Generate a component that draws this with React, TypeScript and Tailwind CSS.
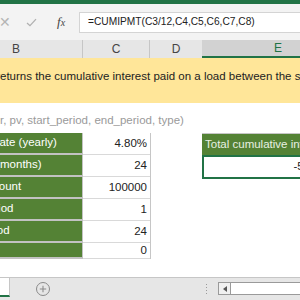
const font = { fontFamily: '"Liberation Sans", Arial, sans-serif' };

const rows = [
  { label: "Interest rate (yearly)", value: "4.80%", h: "h-[22px]" },
  { label: "Periods (months)", value: "24", h: "h-[22px]" },
  { label: "Loan amount", value: "100000", h: "h-[22px]" },
  { label: "Start period", value: "1", h: "h-[22px]" },
  { label: "End period", value: "24", h: "h-[22px]" },
  { label: "Type", value: "0", h: "h-[16px]" },
];

// text whose start is scrolled off the left edge of the sheet
function Clipped({ hidden, shown }: { hidden: string; shown: string }) {
  return (
    <div className="flex whitespace-nowrap">
      <span className="flex w-0 shrink-0 justify-end">{hidden}</span>
      <span>{shown}</span>
    </div>
  );
}

export default function App() {
  return (
    <div
      className="flex h-[300px] w-[300px] flex-col overflow-hidden bg-white text-[11.5px] text-[#222]"
      style={font}
    >
      <div className="h-[4px] shrink-0 bg-[#217346]" />

      {/* formula bar */}
      <div className="flex h-[36px] shrink-0 items-center bg-[#f3f3f3]">
        <div className="flex w-[79px] shrink-0 items-center text-[#b5b5b5]">
          <span className="ml-[-1px] w-[26px] text-[14px]">✕</span>
          <svg viewBox="0 0 12 10" className="ml-[1px] h-[9px] w-[11px]" fill="none" stroke="#b0b0b0" strokeWidth="1.4">
            <path d="M1 5.5 L4.3 8.5 L11 1.2" />
          </svg>
          <span
            className="ml-[20px] text-[13px] italic text-[#444]"
            style={{ fontFamily: '"Liberation Serif", serif' }}
          >
            f<span className="text-[10px]">x</span>
          </span>
        </div>
        <div className="flex h-[21px] flex-1 items-center border border-r-0 border-[#d4d4d4] bg-white pl-[8px] text-[10.2px] text-[#222]">
          =CUMIPMT(C3/12,C4,C5,C6,C7,C8)
        </div>
      </div>

      {/* column headers */}
      <div className="flex h-[18px] shrink-0 bg-[#e6e6e6] text-[12px] text-[#444]">
        <div className="flex w-[83px] shrink-0 items-center border-r border-[#c6c6c6] pl-[12px]">B</div>
        <div className="flex w-[67px] shrink-0 items-center justify-center border-r border-[#c6c6c6]">C</div>
        <div className="flex w-[52px] shrink-0 items-center justify-center">D</div>
        <div className="flex w-[152px] shrink-0 items-center justify-center border-b-2 border-[#217346] bg-[#d2d2d2] text-[#217346]">
          E
        </div>
      </div>

      {/* description */}
      <div className="h-[45px] shrink-0 bg-[#ffe699] pt-[10px] text-[#222]">
        <Clipped
          hidden="The Excel CUMIPMT function r"
          shown="eturns the cumulative interest paid on a load between the start period and end period."
        />
      </div>

      <div className="flex h-[30px] shrink-0 items-center pt-[6px] text-[#9a9a9a]">
        <Clipped hidden="=CUMIPMT(rate, npe" shown="r, pv, start_period, end_period, type)" />
      </div>

      {/* tables */}
      <div className="flex shrink-0">
        <div className="flex w-[151px] shrink-0 flex-col border-r border-[#c6c6c6]">
          {rows.map((r) => (
            <div key={r.label} className={`flex ${r.h} shrink-0`}>
              <div className="flex w-[83px] shrink-0 items-center overflow-hidden border-b-2 border-r border-[#c2c2c2] bg-[#548235] text-white">
                <span className="ml-[-46px] whitespace-nowrap">{r.label}</span>
              </div>
              <div className="flex flex-1 items-center justify-end border-b border-[#d9d9d9] pr-[3px]">
                {r.value}
              </div>
            </div>
          ))}
        </div>

        <div className="ml-[51px] flex w-[146px] shrink-0 flex-col">
          <div className="flex h-[22px] items-center border-t border-[#c6c6c6] bg-[#548235] pl-[3px] whitespace-nowrap text-[#e8f0e2]">
            Total cumulative interest
          </div>
          <div className="flex h-[24px] items-center justify-end border-2 border-[#217346] pr-[4px]">
            -5,076.56
          </div>
        </div>
      </div>

      <div className="flex-1" />

      {/* sheet tabs */}
      <div className="flex h-[23px] shrink-0 items-start border-t border-[#c6c6c6] bg-[#e6e6e6]">
        <div className="h-[19px] w-[10px] shrink-0 border-r border-b-2 border-r-[#c6c6c6] border-b-[#217346] bg-white" />
        <div className="ml-[26px] mt-[4px] flex h-[14px] w-[14px] items-center justify-center rounded-full border border-[#8a8a8a] text-[#8a8a8a]">
          <svg viewBox="0 0 10 10" className="h-[8px] w-[8px]" stroke="currentColor" strokeWidth="1.3">
            <path d="M5 1 V9 M1 5 H9" />
          </svg>
        </div>
        <div className="ml-[156px] mt-[6px] flex flex-col gap-[2px]">
          <div className="h-[1px] w-[1px] bg-[#9a9a9a]" />
          <div className="h-[1px] w-[1px] bg-[#9a9a9a]" />
          <div className="h-[1px] w-[1px] bg-[#9a9a9a]" />
          <div className="h-[1px] w-[1px] bg-[#9a9a9a]" />
        </div>
        <div className="ml-[11px] mt-[4px] flex h-[13px] flex-1 border border-r-0 border-[#9a9a9a] bg-white">
          <div className="flex w-[12px] items-center justify-center border-r border-[#9a9a9a] bg-[#f0f0f0]">
            <svg viewBox="0 0 4 6" className="h-[6px] w-[4px]" fill="#555">
              <path d="M4 0 V6 L0 3 Z" />
            </svg>
          </div>
        </div>
      </div>
    </div>
  );
}
